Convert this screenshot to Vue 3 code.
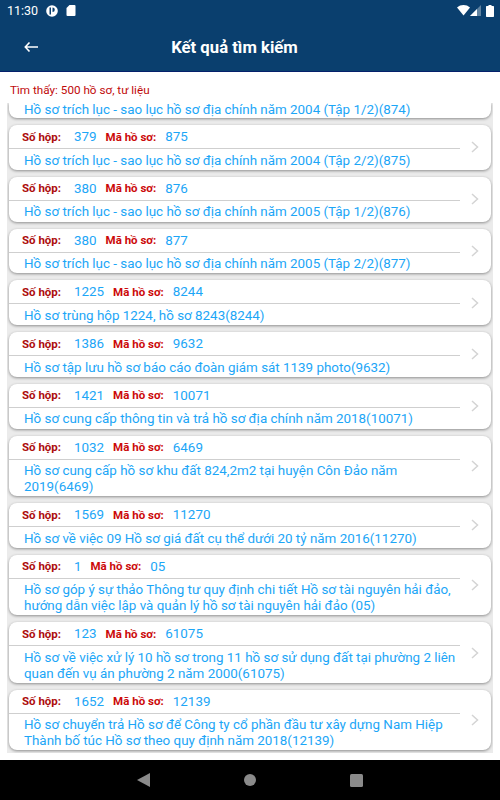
<script setup>
const records = [
  { box: '379', code: '875', title: 'Hồ sơ trích lục - sao lục hồ sơ địa chính năm 2004 (Tập 2/2)(875)' },
  { box: '380', code: '876', title: 'Hồ sơ trích lục - sao lục hồ sơ địa chính năm 2005 (Tập 1/2)(876)' },
  { box: '380', code: '877', title: 'Hồ sơ trích lục - sao lục hồ sơ địa chính năm 2005 (Tập 2/2)(877)' },
  { box: '1225', code: '8244', title: 'Hồ sơ trùng hộp 1224, hồ sơ 8243(8244)' },
  { box: '1386', code: '9632', title: 'Hồ sơ tập lưu hồ sơ báo cáo đoàn giám sát 1139 photo(9632)' },
  { box: '1421', code: '10071', title: 'Hồ sơ cung cấp thông tin và trả hồ sơ địa chính năm 2018(10071)' },
  { box: '1032', code: '6469', title: 'Hồ sơ cung cấp hồ sơ khu đất 824,2m2 tại huyện Côn Đảo năm 2019(6469)' },
  { box: '1569', code: '11270', title: 'Hồ sơ về việc 09 Hồ sơ giá đất cụ thể dưới 20 tỷ năm 2016(11270)' },
  { box: '1', code: '05', title: 'Hồ sơ góp ý sự thảo Thông tư quy định chi tiết Hồ sơ tài nguyên hải đảo, hướng dẫn việc lập và quản lý hồ sơ tài nguyên hải đảo (05)' },
  { box: '123', code: '61075', title: 'Hồ sơ về việc xử lý 10 hồ sơ trong 11 hồ sơ sử dụng đất tại phường 2 liên quan đến vụ án phường 2 năm 2000(61075)' },
  { box: '1652', code: '12139', title: 'Hồ sơ chuyển trả Hồ sơ để Công ty cổ phần đầu tư xây dựng Nam Hiệp Thành bố túc Hồ sơ theo quy định năm 2018(12139)' },
];
</script>

<template>
  <div class="screen">
    <div class="statusbar">
      <div class="status-left">
        <span class="clock">11:30</span>
        <svg width="12" height="12" viewBox="0 0 12 12">
          <circle cx="6" cy="6" r="5.800" fill="#fff" />
          <path d="M3.500 2.500H5V9.500H3.500zM6.500 2.500a2.300 2.300 0 0 1 0 4.600z" fill="#0a3f6e" />
        </svg>
        <svg width="10" height="11" viewBox="0 0 10 11">
          <path d="M3.500 0H8.500a1 1 0 0 1 1 1v9a1 1 0 0 1-1 1H1.500a1 1 0 0 1-1-1V3z" fill="#fff" />
        </svg>
      </div>
      <div class="status-right">
        <svg width="13" height="11" viewBox="0 0 13 11">
          <path d="M0 2.500C3.700-.8 9.300-.8 13 2.500L6.500 10.500z" fill="#fff" />
        </svg>
        <svg class="signal" width="11" height="11" viewBox="0 0 11 11">
          <path d="M11 0V11H0z" fill="#fff" opacity="0.35" />
          <path d="M7 4V11H0z" fill="#fff" />
        </svg>
        <svg class="battery" width="8" height="12" viewBox="0 0 8 12">
          <path d="M2.500 0H5.500V1H7.300A.7.7 0 0 1 8 1.700V11.300A.7.7 0 0 1 7.300 12H.7A.7.7 0 0 1 0 11.300V1.700A.7.7 0 0 1 .7 1H2.500z" fill="#fff" />
        </svg>
      </div>
    </div>

    <header class="appbar">
      <svg class="back" width="14" height="12" viewBox="0 0 14 12">
        <path d="M5.500 1.500 1.300 6l4.200 4.500M1.300 6H14" fill="none" stroke="#fff" stroke-width="1.600" />
      </svg>
      <h1 class="title">Kết quả tìm kiếm</h1>
    </header>

    <p class="found">Tìm thấy: 500 hồ sơ, tư liệu</p>

    <main class="list">
      <div class="partial">
        <span class="partial-text">Hồ sơ trích lục - sao lục hồ sơ địa chính năm 2004 (Tập 1/2)(874)</span>
      </div>
      <article v-for="r in records" :key="r.code" class="card">
        <div class="body">
          <div class="meta">
            <span class="label label-box">Số hộp:</span>
            <span class="value value-box">{{ r.box }}</span>
            <span class="label">Mã hồ sơ:</span>
            <span class="value">{{ r.code }}</span>
          </div>
          <div class="name">{{ r.title }}</div>
        </div>
        <svg class="chevron" width="8" height="12" viewBox="0 0 8 12">
          <path d="M1 1l5.500 5L1 11" fill="none" stroke="#d4d4d4" stroke-width="1.500" />
        </svg>
      </article>
    </main>

    <nav class="navbar">
      <svg width="13" height="14" viewBox="0 0 13 14"><path d="M13 0V14L0 7z" fill="#8a8a8a" /></svg>
      <svg width="12" height="12" viewBox="0 0 12 12"><circle cx="6" cy="6" r="6" fill="#8a8a8a" /></svg>
      <svg width="13" height="13" viewBox="0 0 13 13"><rect width="13" height="13" rx="1.500" fill="#8a8a8a" /></svg>
    </nav>
  </div>
</template>

<style scoped>
.screen {
  width: 500px;
  height: 800px;
  display: flex;
  flex-direction: column;
  background: #fff;
  font-family: Roboto, "Liberation Sans", sans-serif;
  overflow: hidden;
}

.statusbar {
  height: 24px;
  flex: none;
  display: flex;
  align-items: center;
  justify-content: space-between;
  padding: 0 6px 3px 7px;
  box-sizing: border-box;
  background: #0a3f6e;
  color: #fff;
}

.status-left,
.status-right {
  display: flex;
  align-items: center;
}

.status-left {
  gap: 8px;
}

.status-right {
  gap: 0;
}

.battery {
  margin-left: 5px;
}

.clock {
  font-size: 12.500px;
}

.appbar {
  height: 48px;
  flex: none;
  display: flex;
  align-items: center;
  justify-content: center;
  position: relative;
  box-sizing: border-box;
  padding-right: 31px;
  background: #0a3f6e;
  border-bottom: 1px solid #05206b;
}

.back {
  position: absolute;
  left: 24px;
  top: 17px;
}

.title {
  margin: 0;
  font-size: 16.700px;
  font-weight: 700;
  color: #fff;
}

.found {
  margin: 0;
  flex: none;
  height: 31px;
  padding: 10px 0 0 10px;
  box-sizing: border-box;
  font-size: 11.700px;
  line-height: 16px;
  color: #bf0a0a;
}

.list {
  flex: 1;
  min-height: 0;
  margin: 0 7px 7px;
  padding: 0 2px;
  background: #ebebeb;
  overflow: hidden;
}

.partial {
  height: 15px;
  padding-left: 15px;
  margin-bottom: 7px;
  background: #fff;
  border-radius: 0 0 8px 8px;
  box-shadow: 0 1px 3px rgba(0, 0, 0, 0.4);
  font-size: 13.400px;
  line-height: 13px;
  color: #1ca6f7;
  overflow: hidden;
  white-space: nowrap;
}

.card {
  display: flex;
  align-items: center;
  margin-bottom: 7px;
  background: #fff;
  border-radius: 8px;
  box-shadow: 0 1px 3px rgba(0, 0, 0, 0.4);
  overflow: hidden;
}

.body {
  flex: 1;
  min-width: 0;
  margin-right: 11px;
}

.meta {
  display: flex;
  align-items: center;
  height: 24px;
  box-sizing: border-box;
  padding-left: 13px;
  border-bottom: 1px solid #cfcfcf;
}

.label {
  font-size: 11.500px;
  font-weight: 700;
  color: #cc0a0a;
}

.label-box {
  width: 52px;
  color: #ad0c0c;
}

.value {
  font-size: 13.400px;
  color: #1ca6f7;
  margin-left: 9px;
}

.value-box {
  margin-left: 0;
  margin-right: 9px;
}

.name {
  padding: 3.500px 0 1.500px 15px;
  font-size: 13.400px;
  line-height: 15.750px;
  color: #1ca6f7;
}

.chevron {
  flex: none;
  margin-right: 12px;
}

.navbar {
  height: 40px;
  flex: none;
  display: flex;
  align-items: center;
  justify-content: center;
  gap: 94px;
  background: #000;
}
</style>
